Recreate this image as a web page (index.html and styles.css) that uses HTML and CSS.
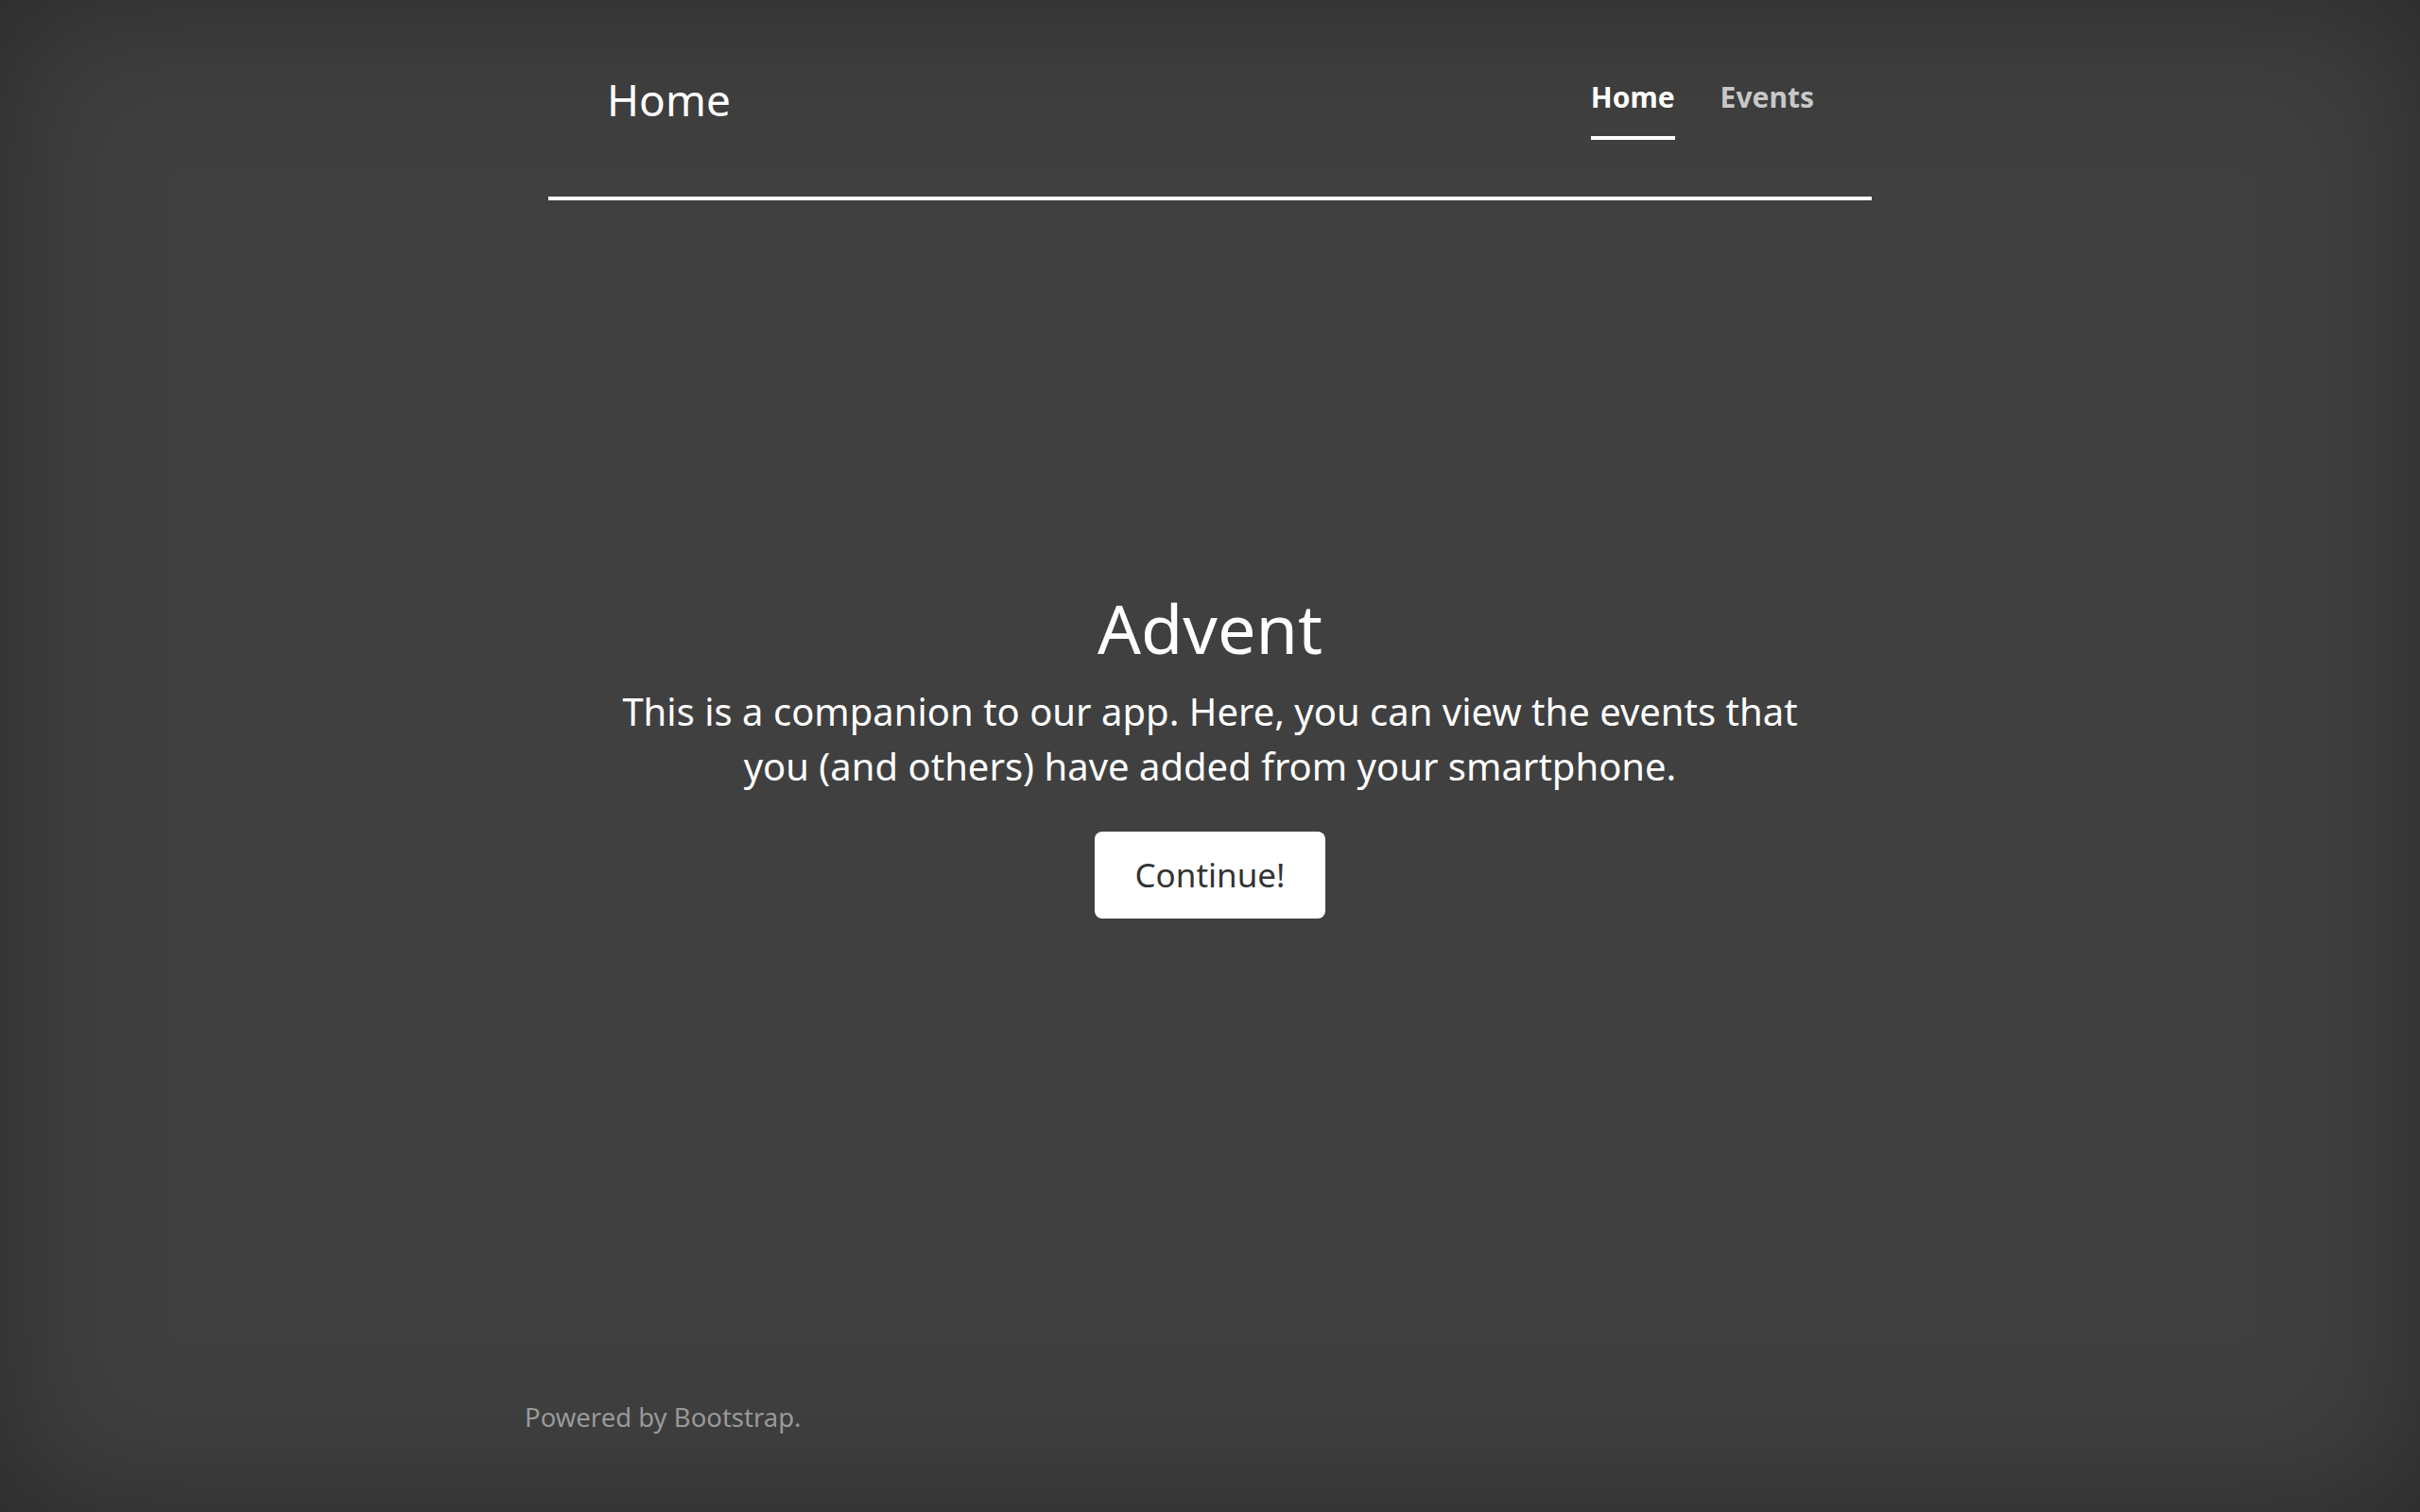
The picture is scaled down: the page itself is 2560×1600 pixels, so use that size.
FILE: index.html
```html
<!DOCTYPE html>
<html>
<head>
    <title>Advent</title>
    <link rel="stylesheet" href="styles.css">
</head>
<body>
    <div class="cover">
        <header class="masthead">
            <h3 class="brand">Home</h3>
            <nav class="nav">
                <a class="nav-link active" href="#">Home</a>
                <a class="nav-link" href="#">Events</a>
            </nav>
        </header>

        <main class="inner">
            <h1>Advent</h1>
            <p class="lead">This is a companion to our app. Here, you can view the events that you (and others) have added from your smartphone.</p>
            <a href="#" class="btn">Continue!</a>
        </main>

        <footer class="mastfoot">
            <p>Powered by Bootstrap.</p>
        </footer>
    </div>
</body>
</html>
```

FILE: styles.css
```css
html, body {
    height: 100%;
    margin: 0;
}
body {
    background-color: #404040;
    color: #fff;
    font-family: "Noto Sans", "Open Sans", sans-serif;
    box-shadow: inset 0 0 160px rgba(0, 0, 0, .35);
}
.cover {
    display: flex;
    flex-direction: column;
    height: 100%;
}
.masthead {
    width: 1400px;
    margin: 0 auto;
    padding: 82px 61px 60px 62px;
    box-sizing: border-box;
    border-bottom: 4px solid #fff;
    display: flex;
    justify-content: space-between;
    align-items: flex-start;
}
.brand {
    margin: 0;
    font-size: 46px;
    font-weight: normal;
    line-height: 1;
}
.nav {
    display: flex;
    gap: 48px;
    padding-top: 6px;
}
.nav-link {
    color: #c8c8c8;
    font-size: 30px;
    font-weight: bold;
    text-decoration: none;
    line-height: 1;
    padding-bottom: 26px;
    border-bottom: 4px solid transparent;
}
.nav-link.active {
    color: #fff;
    border-bottom-color: #fff;
}
.inner {
    flex: 1;
    display: flex;
    flex-direction: column;
    align-items: center;
    justify-content: center;
    text-align: center;
    padding-bottom: 100px;
}
h1 {
    margin: 0 0 16px;
    font-size: 72px;
    font-weight: normal;
    line-height: 1.2;
}
.lead {
    width: 1290px;
    margin: 0 0 40px;
    font-size: 40px;
    line-height: 58px;
}
.btn {
    display: inline-block;
    background-color: #fff;
    color: #333;
    font-size: 35px;
    text-decoration: none;
    height: 92px;
    line-height: 92px;
    width: 244px;
    box-sizing: border-box;
    border-radius: 8px;
}
.mastfoot {
    width: 1450px;
    margin: 0 auto;
    padding-bottom: 82px;
}
.mastfoot p {
    margin: 0;
    color: #999;
    font-size: 27.5px;
}
```
